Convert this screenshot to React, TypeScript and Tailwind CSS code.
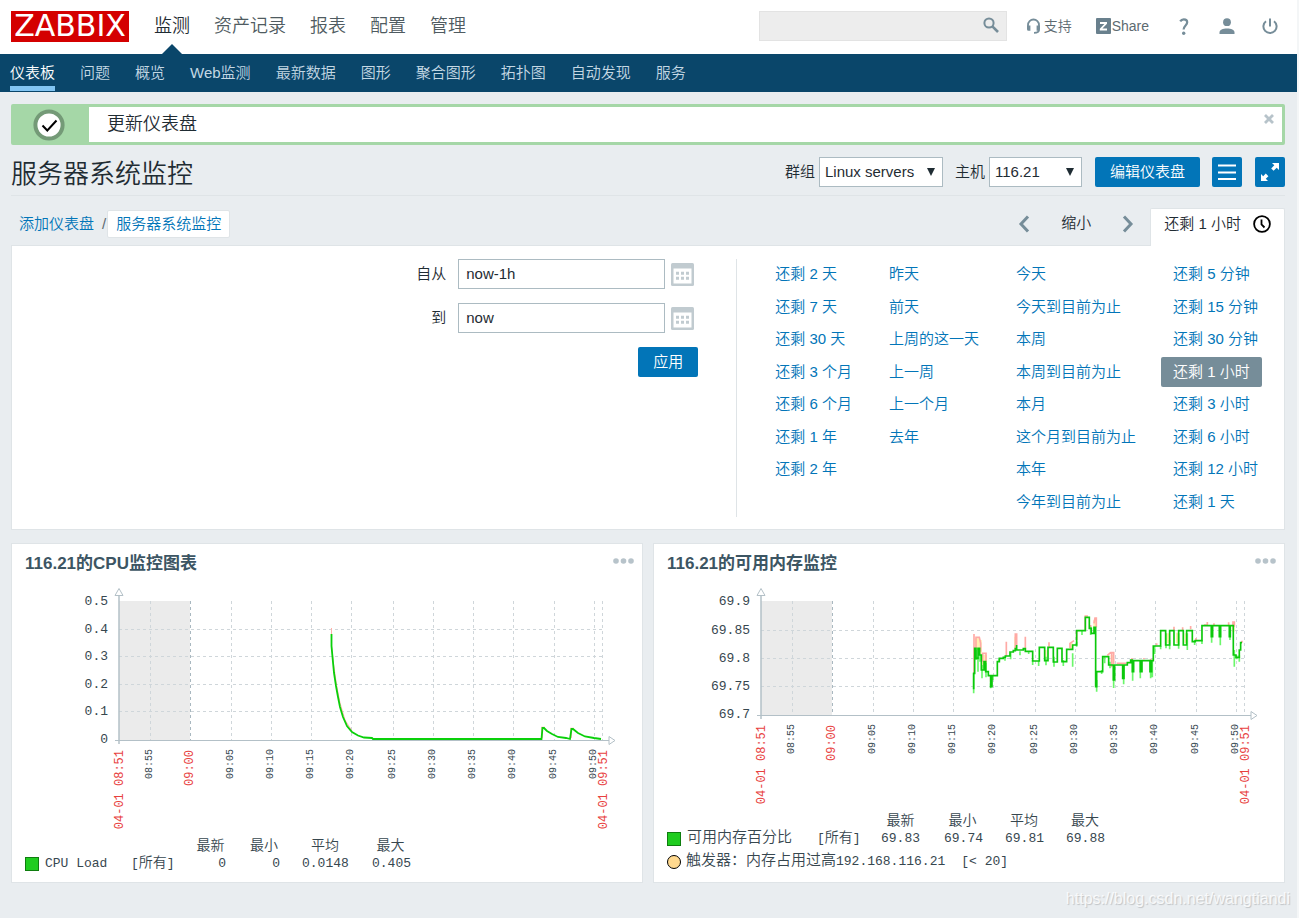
import type { ReactNode } from 'react'

const mainMenu = ['监测', '资产记录', '报表', '配置', '管理']
const subMenu = ['仪表板', '问题', '概览', 'Web监测', '最新数据', '图形', '聚合图形', '拓扑图', '自动发现', '服务']

const ranges = [
  ['还剩 2 天', '还剩 7 天', '还剩 30 天', '还剩 3 个月', '还剩 6 个月', '还剩 1 年', '还剩 2 年'],
  ['昨天', '前天', '上周的这一天', '上一周', '上一个月', '去年'],
  ['今天', '今天到目前为止', '本周', '本周到目前为止', '本月', '这个月到目前为止', '本年', '今年到目前为止'],
  ['还剩 5 分钟', '还剩 15 分钟', '还剩 30 分钟', '还剩 1 小时', '还剩 3 小时', '还剩 6 小时', '还剩 12 小时', '还剩 1 天'],
]
const activeRange = '还剩 1 小时'

const ticks: [number, string][] = [
  [138, '08:55'], [219, '09:05'], [259, '09:10'], [299, '09:15'], [339, '09:20'], [381, '09:25'],
  [421, '09:30'], [461, '09:35'], [501, '09:40'], [542, '09:45'], [582, '09:50'],
]

const sans = "font-['Liberation_Sans','Noto_Sans_CJK_SC',sans-serif]"
const mono = "font-['Liberation_Mono','Noto_Sans_CJK_SC',monospace]"

function Header() {
  return (
    <header className="bg-white">
      <div className="flex h-[54px] items-center pb-[2px] pl-[11px] pr-[18px]">
        <a href="#" className="flex h-[31px] w-[118px] items-center justify-center bg-[#d40000] font-['DejaVu_Sans',sans-serif] text-[30px] font-normal leading-none text-white">
          ZABBIX
        </a>
        <nav className="-mb-[2px] ml-[25px] flex gap-6 self-stretch text-[18px]">
          {mainMenu.map((m, i) => (
            <a key={m} href="#" className={`relative flex items-center pb-[2px] ${i === 0 ? 'text-[#1f2c33]' : 'text-[#4f5b61]'}`}>
              {m}
              {i === 0 && (
                <svg className="absolute bottom-0 left-2 h-[10px] w-5" viewBox="0 0 20 10">
                  <path d="M0 10L10 0l10 10z" fill="#0a466a" />
                </svg>
              )}
            </a>
          ))}
        </nav>
        <div className="ml-auto flex items-center text-[14px] text-[#5d6a71]">
          <div className="relative mr-[19px]">
            <input aria-label="搜索" className="block h-[30px] w-[248px] border border-[#e3e3e3] bg-[#ededed] px-2 outline-none" />
            <button aria-label="搜索" className="absolute right-2 top-[6px]">
              <svg width="16" height="16" viewBox="0 0 16 16" fill="none" stroke="#768d99">
                <circle cx="6" cy="6" r="4.6" strokeWidth="2" />
                <path d="M9.4 9.4L15 15" strokeWidth="2.6" />
              </svg>
            </button>
          </div>
          <a href="#" className="flex items-center gap-[3px]">
            <svg width="15" height="16" viewBox="0 0 15 16" fill="none" stroke="#768d99" strokeWidth="1.8">
              <path d="M2 10V7a5.5 5.5 0 0 1 11 0v3" />
              <path d="M1 7.5h3.4v5.3H2.5A1.5 1.5 0 0 1 1 11.3zM10.6 7.5H14v3.8a1.5 1.5 0 0 1-1.5 1.5h-1.9z" fill="#768d99" stroke="none" />
              <path d="M13 11.5c0 2.4-1.6 3.4-5 3.4" />
            </svg>
            支持
          </a>
          <a href="#" className="ml-6 flex items-center gap-px">
            <svg width="15" height="16" viewBox="0 0 15 16">
              <rect width="15" height="16" rx="1" fill="#69808d" />
              <path d="M4 4h7v1.8L6.4 10.6H11V12.6H3.8v-1.8L8.4 6H4z" fill="#fff" />
            </svg>
            Share
          </a>
          <a href="#" aria-label="帮助" className="ml-[30px]">
            <svg width="10" height="17" viewBox="0 0 10 17">
              <path d="M1.2 3.4C2 2 3.2 1.3 4.8 1.3c2 0 3.4 1.2 3.4 3 0 3-3.6 3.4-3.6 7.2" fill="none" stroke="#768d99" strokeWidth="2.2" />
              <circle cx="4.7" cy="15.2" r="1.7" fill="#768d99" />
            </svg>
          </a>
          <a href="#" aria-label="用户" className="ml-[30px]">
            <svg width="16" height="16" viewBox="0 0 16 16" fill="#768d99">
              <circle cx="8" cy="4.2" r="3.9" />
              <path d="M0.5 16v-1.6C0.5 12 3.8 10.5 8 10.5s7.5 1.5 7.5 3.9V16z" />
            </svg>
          </a>
          <a href="#" aria-label="登出" className="ml-[26px]">
            <svg width="18" height="17" viewBox="0 0 18 17" fill="none" stroke="#768d99" strokeWidth="2">
              <path d="M5 3.2a6.6 6.6 0 1 0 8 0M9 0.5v8" />
            </svg>
          </a>
        </div>
      </div>
      <nav className="flex h-[38px] gap-[25px] bg-[#0a466a] pl-[10px] text-[15px] text-[#c4d8e4]">
        {subMenu.map((m, i) => (
          <a key={m} href="#" className={`mb-px border-b-[5px] pt-2 ${i === 0 ? 'border-[#82c5f2] text-white' : 'border-transparent'}`}>
            {m}
          </a>
        ))}
      </nav>
    </header>
  )
}

function Message() {
  return (
    <div className="flex h-[41px] rounded-[2px] border-[3px] border-[#a5d7a7] bg-white">
      <div className="flex w-[75px] items-center justify-center bg-[#a5d7a7] pr-[5px]">
        <svg width="32" height="32" viewBox="0 0 32 32" fill="none">
          <circle cx="16" cy="16" r="13.6" fill="#fff" stroke="#749a77" strokeWidth="4" />
          <path d="M9.5 16.5l4.8 5L23.5 11.5" stroke="#000" strokeWidth="2" />
        </svg>
      </div>
      <div className="flex-1 pl-[18px] text-[18px] leading-[34px]">更新仪表盘</div>
      <button aria-label="关闭" className="mr-2 mt-[7px] self-start">
        <svg width="10" height="10" viewBox="0 0 10 10" stroke="#b7c3ca" strokeWidth="2.8">
          <path d="M1 1l8 8M9 1L1 9" />
        </svg>
      </button>
    </div>
  )
}

function Select({ id, label, value, width }: { id: string; label: string; value: string; width: string }) {
  return (
    <div className="flex items-center gap-1">
      <label htmlFor={id}>{label}</label>
      <div className={`relative ${width}`}>
        <select id={id} className="block h-[30px] w-full appearance-none border border-[#acbbc2] bg-white pl-[5px] outline-none">
          <option>{value}</option>
        </select>
        <svg className="pointer-events-none absolute right-2 top-[11px]" width="8" height="8" viewBox="0 0 8 8">
          <path d="M0 0h8L4 8z" fill="#1f2c33" />
        </svg>
      </div>
    </div>
  )
}

function TitleBar() {
  return (
    <div className="flex h-[51px] items-center border-b border-[#dfe4e7] pt-2">
      <h1 className="text-[26px] leading-[30px]">服务器系统监控</h1>
      <div className="ml-auto flex items-center pb-1">
        <Select id="group" label="群组" value="Linux servers" width="mr-3 w-[124px]" />
        <Select id="host" label="主机" value="116.21" width="w-[93px]" />
        <button className="ml-[13px] h-[30px] w-[105px] rounded-[2px] bg-[#0275b8] text-white">编辑仪表盘</button>
        <button aria-label="菜单" className="ml-3 flex h-[30px] w-[30px] items-center justify-center rounded-[2px] bg-[#0275b8]">
          <svg width="18" height="16" viewBox="0 0 18 16" stroke="#fff" strokeWidth="2">
            <path d="M0 1.5h18M0 8.5h18M0 15h18" />
          </svg>
        </button>
        <button aria-label="全屏" className="ml-[13px] flex h-[30px] w-[30px] items-center justify-center rounded-[2px] bg-[#0275b8]">
          <svg width="18" height="18" viewBox="0 0 18 18">
            <path d="M11 0h7v7l-2.3-2.3-3.1 3.1-2.4-2.4 3.1-3.1zM0 18v-7l2.2 2.2 2.6-2.6 2.6 2.6-2.6 2.6L7 18z" fill="#fff" />
          </svg>
        </button>
      </div>
    </div>
  )
}

function Chevron({ d, label }: { d: string; label: string }) {
  return (
    <button aria-label={label}>
      <svg width="12" height="18" viewBox="0 0 12 18" fill="none" stroke="#768d99" strokeWidth="3">
        <path d={d} />
      </svg>
    </button>
  )
}

function NavBar() {
  return (
    <div className="flex h-[49px] items-end">
      <div className="mb-[7px] flex items-center pl-2">
        <a href="#" className="text-[#0275b8]">添加仪表盘</a>
        <span className="ml-2 mr-px text-[#5d6a71]">/</span>
        <a href="#" className="rounded-[2px] border border-[#dfe4e7] bg-white px-2 leading-[26px] text-[#0275b8]">服务器系统监控</a>
      </div>
      <div className="ml-auto flex h-[37px] items-center">
        <div className="mr-4 flex items-center gap-[31px] pb-[6px]">
          <Chevron d="M10 1.5L3 9l7 7.5" label="后退" />
          <button>缩小</button>
          <Chevron d="M2 1.5L9 9l-7 7.5" label="前进" />
        </div>
        <button className="relative z-10 -mb-px flex h-[38px] items-center gap-3 self-end rounded-t-[2px] border border-b-0 border-[#dfe4e7] bg-white pb-[7px] pl-[13px] pr-[13px]">
          还剩 1 小时
          <svg width="18" height="18" viewBox="0 0 18 18" fill="none" stroke="#000" strokeWidth="1.8">
            <circle cx="9" cy="9" r="7.9" />
            <path d="M8.5 4.5v5l3 3" />
          </svg>
        </button>
      </div>
    </div>
  )
}

function DateField({ id, label, value }: { id: string; label: string; value: string }) {
  return (
    <div className="flex items-center pr-1">
      <label htmlFor={id} className="mr-3">{label}</label>
      <input id={id} defaultValue={value} className="h-[30px] w-[207px] border border-[#acbbc2] bg-white px-[7px] pb-px outline-none" />
      <button aria-label="日历" className="ml-[6px]">
        <svg width="23" height="23" viewBox="0 0 23 23">
          <rect width="23" height="23" rx="1.5" fill="#c1cbd0" />
          <path d="M2.5 5.5h18v15h-18z" fill="#fff" />
          <path d="M5 10.3h3M10 10.3h3M15 10.3h3M5 15.3h3M10 15.3h3M15 15.3h3" stroke="#c1cbd0" strokeWidth="3" />
        </svg>
      </button>
    </div>
  )
}

function TimeFilter() {
  return (
    <section className="flex border border-[#dfe4e7] bg-white pb-[11px] pr-[14px] pt-3">
      <form className="mb-px mt-px flex flex-1 flex-col items-end gap-[14px] border-r border-[#dfe4e7] pr-[38px]" onSubmit={e => e.preventDefault()}>
        <DateField id="from" label="自从" value="now-1h" />
        <DateField id="to" label="到" value="now" />
        <button className="h-[30px] w-[60px] rounded-[2px] bg-[#0275b8] text-white">应用</button>
      </form>
      <div className="flex gap-[13px] pl-[26px]">
        {ranges.map((col, i) => (
          <ul key={i} className="grid h-[260px] grid-rows-8">
            {col.map(r => (
              <li key={r} className="flex items-center">
                <a href="#" className={`rounded-[2px] px-3 leading-[30px] ${r === activeRange ? 'bg-[#768d99] text-white' : 'text-[#0275b8]'}`}>{r}</a>
              </li>
            ))}
          </ul>
        ))}
      </div>
    </section>
  )
}

function Chart({ bottom, height, yTicks, children }: { bottom: number; height: number; yTicks: [number, string][]; children: ReactNode }) {
  return (
    <svg className={`block w-full font-normal ${mono}`} viewBox={`0 0 630 ${height}`}>
      <rect x="107" y="21" width="71" height={bottom - 21} fill="#ebebeb" />
      <g stroke="#cfd6da" strokeWidth="1" strokeDasharray="3 3">
        {[...ticks.map(t => t[0]), 590].map(x => <path key={x} d={`M${x + 0.5} 21V${bottom}`} />)}
        {yTicks.slice(1, -1).map(([y]) => <path key={y} d={`M107 ${y + 0.5}H591`} />)}
        <path d={`M178.5 21V${bottom}`} stroke="#a9b8c0" />
      </g>
      <g fill="none" stroke="#b3c0c7">
        <path d={`M107 16V${bottom + 4}`} strokeWidth="1.5" />
        <path d={`M103 ${bottom + 0.5}H597`} />
        <path d="M103 15.5h8l-4-7z" fill="#fff" />
        <path d={`M597 ${bottom - 3.5}v8l6-4z`} fill="#fff" />
      </g>
      {children}
      <g fontSize="13" fill="#37474f" textAnchor="end">
        {yTicks.map(([y, t]) => <text key={t} x="96" y={y + 4}>{t}</text>)}
      </g>
      <g fontSize="10" fill="#37474f" textAnchor="end">
        {ticks.map(([x, t]) => <text key={t} transform={`translate(${x + 2} ${bottom + 9}) rotate(-90)`}>{t}</text>)}
      </g>
      <g fontSize="12" fill="#e8413e" textAnchor="end">
        <text transform={`translate(111 ${bottom + 10}) rotate(-90)`}>04-01 08:51</text>
        <text transform={`translate(181 ${bottom + 10}) rotate(-90)`}>09:00</text>
        <text transform={`translate(595 ${bottom + 10}) rotate(-90)`}>04-01 09:51</text>
      </g>
    </svg>
  )
}

interface LegendProps {
  name: string
  values: string[]
  width: string
  cols: string[]
}

function Legend({ name, values, width, cols }: LegendProps) {
  return (
    <table className={`ml-[13px] table-fixed whitespace-nowrap text-left text-[13px] leading-[17px] text-[#37474f] ${width} ${mono}`}>
      <colgroup>
        <col className="w-5" />
        {cols.map((c, i) => <col key={i} className={c} />)}
      </colgroup>
      <thead>
        <tr>
          <th colSpan={3} />
          {['最新', '最小', '平均', '最大'].map(h => <th key={h} className="p-0 pl-[22px] text-center text-[14px] font-[350]">{h}</th>)}
        </tr>
      </thead>
      <tbody>
        <tr>
          <td className="p-0"><div className="h-[14px] w-[14px] border border-[#0f7d0f] bg-[#1fcc1f]" /></td>
          <td className="p-0">{name === 'CPU Load' ? name : <span className="text-[15px]">{name}</span>}</td>
          <td className="p-0">[<span className="text-[14px]">所有</span>]</td>
          {values.map((v, i) => <td key={i} className="p-0 pl-[22px] text-right">{v}</td>)}
        </tr>
      </tbody>
    </table>
  )
}

function Widget({ title, children }: { title: string; children: ReactNode }) {
  return (
    <section className="flex min-w-0 flex-1 flex-col border border-[#dfe4e7] bg-white pb-[10px]">
      <div className="flex h-9 items-start justify-between pl-[13px] pr-2">
        <h2 className="pt-2 text-[17px] font-bold leading-6 text-[#3c5563]">{title}</h2>
        <button aria-label="更多" className="mt-[14px]">
          <svg width="21" height="6" viewBox="0 0 21 6" fill="#b7c3ca">
            <circle cx="3" cy="3" r="2.8" />
            <circle cx="10.5" cy="3" r="2.8" />
            <circle cx="18" cy="3" r="2.8" />
          </svg>
        </button>
      </div>
      {children}
    </section>
  )
}

function CpuWidget() {
  const curve = 'M319.5 54V66L320.5 77L322 93L324 106L326 117L328 127L331 137L335 146L340 152L346 155.5L352 157.5L360 158L361 159H529.5L530.5 148H532L535 151L540 154L546 157L554 158L558 159L559.5 149H561L566 153L573 156.5L582 158L589 159'
  return (
    <Widget title="116.21的CPU监控图表">
      <Chart bottom={160} height={258} yTicks={[[21, '0.5'], [49, '0.4'], [76, '0.3'], [104, '0.2'], [131, '0.1'], [159, '0']]}>
        <path d="M319.5 48V66L321.5 84L324.5 105L328 123L333 140L340 151" fill="none" stroke="#ffb0a8" strokeWidth="1" />
        <path d="M530 158V147.5h3M559 158V148.5h3" fill="none" stroke="#ffb0a8" strokeWidth="1.5" />
        <path d={curve} fill="none" stroke="#0ad00a" strokeWidth="1.8" />
      </Chart>
      <Legend
        name="CPU Load"
        values={['0', '0', '0.0148', '0.405']}
        width="w-[386px]"
        cols={['w-[86px]', 'w-[42px]', 'w-[53px]', 'w-[54px]', 'w-[68px]', 'w-[63px]']}
      />
    </Widget>
  )
}

function MemoryWidget() {
  return (
    <Widget title="116.21的可用内存监控">
      <Chart bottom={135} height={233} yTicks={[[21, '69.9'], [50, '69.85'], [78, '69.8'], [106, '69.75'], [134, '69.7']]}>
        {/* samples are plotted at three units per chart pixel */}
        <g transform="translate(306 10) scale(0.3333)" fill="none" strokeWidth="5">
          <path
            d="M48 145V175M54 145V180M61 150V195M167 140V180M70 195V235M77 195V240M94 257V270M256 180V210M334 158V180M404 90V125M456 195V225M624 130V160M652 128V160M678 130V160M820 100V125"
            stroke="#ffeeb0" strokeWidth="8"
          />
          <path
            d="M42 250V132M48 175V142H58L62 160V185M68 215V190H78V215M92 255V275M139 198V155M166 178V132H170V165M196 180V140M267 170V157M330 174V160L342 152M350 150V122M376 120V78H384M392 118V105M402 100L405 84H409V112M442 196L452 188H461V222M455 190V232M470 220H500M516 210V204M552 208V204M572 210V206M590 166V160M642 120V110M668 120V112M692 118V108M708 152V144M732 105H742V96M762 107V100M806 105V97M819 105V96H823V110M846 158V152"
            stroke="#ffaaa5"
          />
          <path
            d="M41 310V250M48 210V180M54 245V200M60 215V195M66 265V225M78 262V218M92 295V280M99 270V258M118 214V205M135 212V203M152 208V188M180 196V184M206 192V184M218 225V210M236 228V212M258 226V200M282 230V200M310 228V210M338 230V190M350 170V155M366 135V122M392 135V110M410 305V270M425 252V240M434 220V200M450 235V215M461 294V235M491 283V225M518 272V215M541 265V212M572 265V212M577 262V212M584 192V168M602 178V168M618 175V130M629 178V150M656 176V130M682 180V130M704 165V150M726 162V150M755 158V112M781 166V112M810 150V112M823 230V180M830 208V196M838 215V196"
            stroke="#6bf76b"
          />
          <path
            d="M41 298V250H44V175H48V205H54V175H59V195H64V240H72V215H77V245H85V257H92V290H96V257H112V215H118V205H130V202H136V198H150V186H160V182H166V176H170V165V180H190V176H196V184H218V213H238V172H254V212H264V172H280V216H292V175H306V215H320V178H338V165H350V122H376V82H388V115H394V130H402V112H407V290H410V245H428V200H446V225H460V270H464V225H488V265H492V225H502V218H512V210H517V245H521V212H541V245H546V212H570V245H575V212H580V168H602V122H617V165H629V122H642V165H656V122H670V165H680V122H697V155H706V152H726V107H754V140H758V107H778V140H782V107H808V140H811V107H820V195H828V202H838V180H842V158H846"
            stroke="#0cc80c"
          />
        </g>
      </Chart>
      <Legend
        name="可用内存百分比"
        values={['69.83', '69.74', '69.81', '69.88']}
        width="w-[438px]"
        cols={['w-[130px]', 'w-[42px]', 'w-[61px]', 'w-[63px]', 'w-[60px]', 'w-[62px]']}
      />
      <div className={`ml-[13px] mt-[5px] flex items-center whitespace-pre text-[13px] leading-[20px] text-[#37474f] ${mono}`}>
        <div className="mr-[5px] h-[14px] w-[14px] rounded-full border border-black bg-[#ffd98f]" />
        <span className="text-[15px]">触发器：内存占用过高</span>
        <span>192.168.116.21</span>
        <span className="ml-4">[&lt; 20]</span>
      </div>
    </Widget>
  )
}

export default function App() {
  return (
    <div className={`min-h-screen border-r-2 border-[#f4f6f7] bg-[#e9edf0] text-[15px] font-[350] text-[#1f2c33] ${sans}`}>
      <Header />
      <main className="pl-[11px] pr-3 pt-3">
        <Message />
        <TitleBar />
        <NavBar />
        <TimeFilter />
        <div className="mt-[13px] flex items-start gap-[10px]">
          <CpuWidget />
          <MemoryWidget />
        </div>
      </main>
      <footer className="mt-1 pr-[7px] text-right text-[16px] text-white/80 [text-shadow:1px_1px_1px_rgba(0,0,0,0.18)]">
        https://blog.csdn.net/wangtiandi
      </footer>
    </div>
  )
}
